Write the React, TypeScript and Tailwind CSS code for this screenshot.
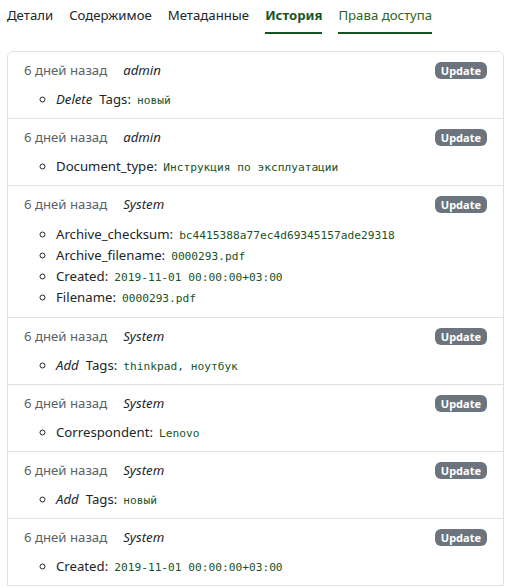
import React from 'react';

type Change = { action?: string; field: string; value: string };
type Entry = { user: string; changes: Change[] };

const entries: Entry[] = [
  { user: 'admin', changes: [{ action: 'Delete', field: 'Tags', value: 'новый' }] },
  { user: 'admin', changes: [{ field: 'Document_type', value: 'Инструкция по эксплуатации' }] },
  {
    user: 'System',
    changes: [
      { field: 'Archive_checksum', value: 'bc4415388a77ec4d69345157ade29318' },
      { field: 'Archive_filename', value: '0000293.pdf' },
      { field: 'Created', value: '2019-11-01 00:00:00+03:00' },
      { field: 'Filename', value: '0000293.pdf' },
    ],
  },
  { user: 'System', changes: [{ action: 'Add', field: 'Tags', value: 'thinkpad, ноутбук' }] },
  { user: 'System', changes: [{ field: 'Correspondent', value: 'Lenovo' }] },
  { user: 'System', changes: [{ action: 'Add', field: 'Tags', value: 'новый' }] },
  { user: 'System', changes: [{ field: 'Created', value: '2019-11-01 00:00:00+03:00' }] },
];

const tabs = ['Детали', 'Содержимое', 'Метаданные', 'История', 'Права доступа'];

export default function App() {
  return (
    <div className="w-[508px] h-[588px] overflow-hidden bg-white text-[#212529] text-[13.2px] leading-[21px] font-['Noto_Sans',sans-serif]">
      {/* Tabs */}
      <nav className="flex gap-4 pl-[7px] pt-[5px]">
        {tabs.map((tab) => {
          const active = tab === 'История';
          const underlined = active || tab === 'Права доступа';
          return (
            <div
              key={tab}
              className={
                'pb-[6px] border-b-2 ' +
                (underlined ? 'border-[#17541f] ' : 'border-transparent ') +
                (active ? 'font-bold text-[#17541f]' : tab === 'Права доступа' ? 'text-[#2f6425]' : 'text-[#212529]')
              }
            >
              {tab}
            </div>
          );
        })}
      </nav>

      {/* History list (continues below the fold) */}
      <div className="ml-[7px] mt-[17px] w-[497px] border border-[#dee2e6] rounded-t-md">
        {entries.map((entry, i) => {
          const multi = entry.changes.length > 1;
          return (
            <div
              key={i}
              className={'px-4 pt-2 ' + (multi ? 'pb-[9px] ' : 'pb-2 ') + (i > 0 ? 'border-t border-[#dee2e6]' : '')}
            >
              <div className="flex items-center h-[21px]">
                <span className="text-[#5c6166]">6 дней назад</span>
                <span className="ml-4 italic">{entry.user}</span>
                <span className="ml-auto rounded-md bg-[#6c757d] px-[6px] py-[2px] text-[11px] leading-[13px] font-bold text-white">
                  Update
                </span>
              </div>
              <ul className={(multi ? 'mt-[9px] ' : 'mt-2 ') + 'pl-8 list-[circle]'}>
                {entry.changes.map((c, j) => (
                  <li key={j} className="h-[21px]">
                    {c.action && <em className="mr-[7px]">{c.action}</em>}
                    {c.field}:
                    <code className="ml-[6px] font-['DejaVu_Sans_Mono',monospace] text-[11.2px] leading-none text-[#17541f]">
                      {c.value}
                    </code>
                  </li>
                ))}
              </ul>
            </div>
          );
        })}
      </div>
    </div>
  );
}
